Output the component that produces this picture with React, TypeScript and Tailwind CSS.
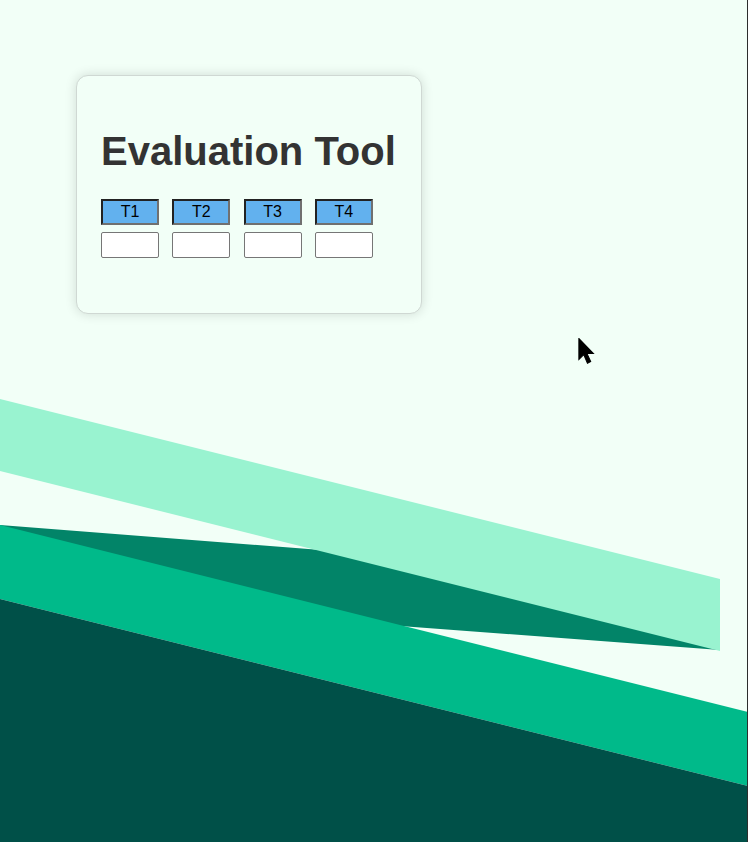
import React from 'react';

const tabs = ['T1', 'T2', 'T3', 'T4'];

const Card: React.FC = () => (
  <div className="w-[346px] h-[239px] rounded-[12px] border border-[#cfd8d3] bg-[#f2fff7] shadow-[0_0_12px_rgba(0,0,0,0.14)] px-[24px] pt-[25px]">
    <h1 className="mt-[27px] mb-[25px] text-[40px] leading-[46px] font-bold text-[#333] whitespace-nowrap font-['Liberation_Sans',Arial,sans-serif]">
      Evaluation Tool
    </h1>
    <div className="grid grid-cols-[58px_58px_58px_58px] gap-x-[13.3px] gap-y-[7px]">
      {tabs.map((t) => (
        <button
          key={t}
          className="h-[26px] bg-[#62b1ee] border-2 border-t-[#222] border-l-[#222] border-b-[#707070] border-r-[#707070] text-[16px] leading-none text-black font-['Liberation_Sans',Arial,sans-serif]"
        >
          {t}
        </button>
      ))}
      {tabs.map((t) => (
        <input
          key={t + '-in'}
          className="h-[26px] w-[58px] bg-white border border-[#767676] rounded-[2px]"
        />
      ))}
    </div>
  </div>
);

export default function App() {
  return (
    <div className="relative min-h-[842px] bg-[#f2fff7] overflow-hidden border-r border-[#2d2d2d]">
      <div className="pt-[75px] pl-[76px]">
        <Card />
      </div>
      <svg className="block mt-[67px]" width="748" height="462" viewBox="0 0 748 462">
        <polygon points="0,144 720,200 720,269 0,215" fill="#028468" />
        <polygon points="0,18 720,198 720,270 0,90" fill="#99f3d0" />
        <polygon points="0,144 748,331 748,405 0,218" fill="#00ba8a" />
        <polygon points="0,218 748,405 748,462 0,462" fill="#005048" />
      </svg>
      <svg className="absolute left-[578px] top-[338px]" width="20" height="30" viewBox="0 0 18 28">
        <polygon points="0.5,0.5 0.5,20 5,15.5 8.5,23.5 11.5,22 8,14.5 14,14.5" fill="#000" stroke="#000" strokeWidth="1" />
      </svg>
    </div>
  );
}
